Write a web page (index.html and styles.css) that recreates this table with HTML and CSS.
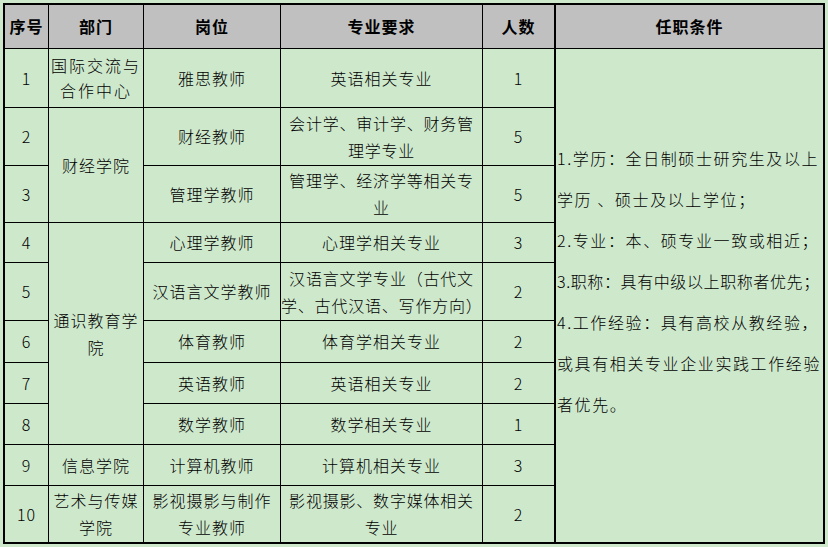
FILE: index.html
```html
<!DOCTYPE html>
<html lang="zh-CN">
<head>
<meta charset="utf-8">
<title>岗位表</title>
<link rel="stylesheet" href="styles.css">
</head>
<body>
<table class="grid">
  <colgroup>
    <col class="c-no"><col class="c-dept"><col class="c-post"><col class="c-major"><col class="c-num"><col class="c-cond">
  </colgroup>
  <thead>
    <tr class="r-head"><th>序号</th><th>部门</th><th>岗位</th><th>专业要求</th><th class="num">人数</th><th class="last">任职条件</th></tr>
  </thead>
  <tbody>
    <tr class="r1"><td>1</td><td class="wide">国际交流与<br>合作中心</td><td>雅思教师</td><td>英语相关专业</td><td class="num">1</td>
      <td rowspan="10" class="cond">
        <div class="ln">1.学历：全日制硕士研究生及以上</div>
        <div class="ln">学历 、硕士及以上学位；</div>
        <div class="ln">2.专业：本、硕专业一致或相近；</div>
        <div class="ln squeeze">3.职称：具有中级以上职称者优先；</div>
        <div class="ln">4.工作经验：具有高校从教经验，</div>
        <div class="ln">或具有相关专业企业实践工作经验</div>
        <div class="ln">者优先。</div>
      </td></tr>
    <tr class="r2"><td>2</td><td rowspan="2">财经学院</td><td>财经教师</td><td class="tight">会计学、审计学、财务管<br>理学专业</td><td class="num">5</td></tr>
    <tr class="r3"><td>3</td><td>管理学教师</td><td class="tight">管理学、经济学等相关专<br>业</td><td class="num">5</td></tr>
    <tr class="r4"><td>4</td><td rowspan="5">通识教育学<br>院</td><td>心理学教师</td><td>心理学相关专业</td><td class="num">3</td></tr>
    <tr class="r5"><td>5</td><td>汉语言文学教师</td><td class="tight">汉语言文学专业（古代文<br>学、古代汉语、写作方向）</td><td class="num">2</td></tr>
    <tr class="r6"><td>6</td><td>体育教师</td><td>体育学相关专业</td><td class="num">2</td></tr>
    <tr class="r7"><td>7</td><td>英语教师</td><td>英语相关专业</td><td class="num">2</td></tr>
    <tr class="r8"><td>8</td><td>数学教师</td><td>数学相关专业</td><td class="num">1</td></tr>
    <tr class="r9"><td>9</td><td>信息学院</td><td>计算机教师</td><td>计算机相关专业</td><td class="num">3</td></tr>
    <tr class="r10"><td>10</td><td>艺术与传媒<br>学院</td><td>影视摄影与制作<br>专业教师</td><td class="tight">影视摄影、数字媒体相关<br>专业</td><td class="num">2</td></tr>
  </tbody>
</table>
</body>
</html>
```
FILE: styles.css
```css
* { box-sizing: border-box; }
html, body { margin: 0; padding: 0; }
body {
  background: #cee8cc;
  padding: 3px 0 0 3px;
  font-family: "Noto Sans CJK SC", "Noto Sans", sans-serif;
  color: #000;
}
.grid {
  border-collapse: separate;
  border-spacing: 0;
  table-layout: fixed;
  width: 822px;
  border: 2px solid #000;
  background: #cee8cc;
}
.c-no { width: 44px; }
.c-dept { width: 95px; }
.c-post { width: 137px; }
.c-major { width: 202px; }
.c-num { width: 73px; }
.c-cond { width: 267px; }

.grid th, .grid td {
  padding: 0;
  border-right: 1px solid #000;
  border-bottom: 1px solid #000;
  text-align: center;
  vertical-align: middle;
  font-size: 16px;
  line-height: 27px;
  letter-spacing: 1px;
  white-space: nowrap;
  overflow: hidden;
  font-weight: 300;
}
.grid th {
  background: #c0c0c0;
  font-weight: 700;
}
.grid .num { border-right-width: 2px; }
.grid th.last { border-right: 0; }
.grid tbody tr:last-child td { border-bottom: 0; }
.grid td.tight { letter-spacing: 0.8px; }
.grid td.wide { letter-spacing: 2px; line-height: 25px; }

.r-head { height: 44px; }
.r1 { height: 59px; }
.r2 { height: 58px; }
.r3 { height: 57px; }
.r4 { height: 40px; }
.r5 { height: 58px; }
.r6 { height: 42px; }
.r7 { height: 41px; }
.r8 { height: 41px; }
.r9 { height: 41px; }
.r10 { height: 56px; }

.grid td.cond {
  border-right: 0;
  border-bottom: 0;
  text-align: left;
  vertical-align: top;
  padding: 89px 0 0 1px;
}
.ln {
  line-height: 41px;
  white-space: nowrap;
  letter-spacing: 1.6px;
}
.ln.squeeze { letter-spacing: 0.6px; }
```
